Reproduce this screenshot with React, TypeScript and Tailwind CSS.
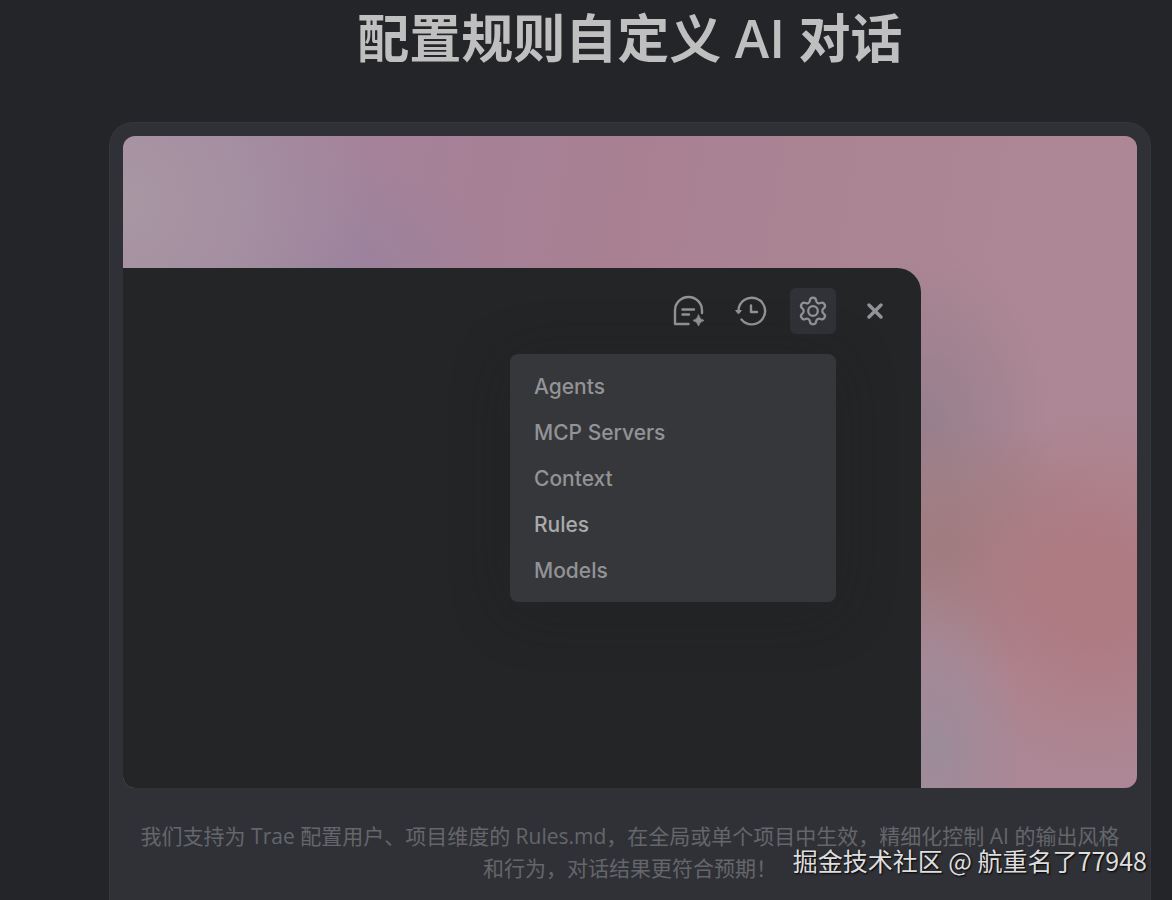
import type { ReactNode } from "react"

const menuItems = ["Agents", "MCP Servers", "Context", "Rules", "Models"]

interface ToolButtonProps {
  label: string
  active?: boolean
  children: ReactNode
}

function ToolButton({ label, active = false, children }: ToolButtonProps) {
  return (
    <button
      type="button"
      aria-label={label}
      className={`flex size-[46px] items-center justify-center rounded-md text-[#929396] ${active ? "bg-[#313238]" : ""}`}
    >
      {children}
    </button>
  )
}

function NewChatIcon() {
  return (
    <svg width="32" height="32" viewBox="0 0 32 32" fill="none" stroke="currentColor" strokeWidth="2.4" strokeLinecap="round" strokeLinejoin="round">
      <path d="M15.5 29H2V15.500a13.500 13.500 0 0 1 27 0V18" />
      <path d="M9.500 14.500h11.500M9.500 19.500h6.500" />
      <path d="M25.500 20q1 4.500 5.500 5.500q-4.500 1-5.500 5.500q-1-4.500-5.500-5.500q4.500-1 5.500-5.500Z" fill="currentColor" strokeWidth="0.8" />
    </svg>
  )
}

function HistoryIcon() {
  return (
    <svg width="32" height="32" viewBox="0 0 32 32" fill="none" stroke="currentColor" strokeWidth="2.4" strokeLinecap="round" strokeLinejoin="round">
      <path d="M3.500 15.500A13.300 13.300 0 1 1 6.500 24.500" />
      <path d="M1 15.500h5.400L3.700 18.700Z" fill="currentColor" strokeWidth="1" />
      <path d="M16 10.500V17h6" />
    </svg>
  )
}

function GearIcon() {
  return (
    <svg width="32" height="32" viewBox="0 0 24 24" fill="none" stroke="currentColor" strokeWidth="1.7" strokeLinejoin="round">
      <path d="M9.671 4.136a2.34 2.34 0 0 1 4.659 0 2.34 2.34 0 0 0 3.319 1.915 2.34 2.34 0 0 1 2.33 4.033 2.34 2.34 0 0 0 0 3.831 2.34 2.34 0 0 1-2.33 4.033 2.34 2.34 0 0 0-3.319 1.915 2.34 2.34 0 0 1-4.659 0 2.34 2.34 0 0 0-3.32-1.915 2.34 2.34 0 0 1-2.33-4.033 2.34 2.34 0 0 0 0-3.831A2.34 2.34 0 0 1 6.35 6.051a2.34 2.34 0 0 0 3.319-1.915" />
      <circle cx="12" cy="12" r="3.6" />
    </svg>
  )
}

function CloseIcon() {
  return (
    <svg width="16" height="16" viewBox="0 0 16 16" fill="none" stroke="currentColor" strokeWidth="3.4" strokeLinecap="round">
      <path d="M2 2l12 12M14 2L2 14" />
    </svg>
  )
}

function SettingsMenu() {
  return (
    <ul className="mt-5 mr-[62px] w-[326px] rounded-lg bg-[#36373a] pt-[10px] pb-2 shadow-[0_8px_60px_rgba(30,30,30,0.3)]">
      {menuItems.map((item) => (
        <li key={item}>
          <button
            type="button"
            className={`flex h-[46px] w-full items-center px-6 text-left font-[Inter,sans-serif] text-[21px] font-medium ${item === "Rules" ? "text-[#a9aaac]" : "text-[#929396]"}`}
          >
            {item}
          </button>
        </li>
      ))}
    </ul>
  )
}

export default function App() {
  return (
    <div className="relative flex min-h-screen flex-col bg-[#242529] pr-[21px] pl-[109px] font-['Open_Sans','Noto_Sans_CJK_SC',sans-serif]">
      <h1 className="pt-[6px] text-center text-[52px] leading-[64px] font-semibold text-[#bfbfbf]">
        配置规则自定义 AI 对话
      </h1>

      <section className="mt-[52px] flex-1 rounded-t-3xl border border-b-0 border-[#35363c] bg-[#303136] px-[13px] pt-[13px]">
        <div className="overflow-hidden rounded-xl bg-[radial-gradient(ellipse_250px_260px_at_0%_10%,#a997a3,#a48ea1_50%,#a48ea100),radial-gradient(ellipse_180px_130px_at_20%_22%,#9a829e,#9a829e00),radial-gradient(ellipse_90px_170px_at_80%_94%,#9c8c9a,#9c8c9a00),radial-gradient(ellipse_170px_180px_at_96%_70%,#ae7b82_25%,#ae7b8200),radial-gradient(ellipse_170px_130px_at_82%_63%,#9e7b7d,#9e7b7d00),radial-gradient(ellipse_130px_180px_at_79%_44%,#977f8d,#977f8d00),linear-gradient(100deg,#a4829a_20%,#a88092_45%,#ad8795_80%)] pt-[132px]">
          <div className="mr-[216px] flex h-[520px] flex-col items-end rounded-tr-3xl bg-[#242527] pt-5 pr-[23px]">
            <div className="flex gap-4">
              <ToolButton label="New chat">
                <NewChatIcon />
              </ToolButton>
              <ToolButton label="History">
                <HistoryIcon />
              </ToolButton>
              <ToolButton label="Settings" active>
                <GearIcon />
              </ToolButton>
              <ToolButton label="Close">
                <CloseIcon />
              </ToolButton>
            </div>
            <SettingsMenu />
          </div>
        </div>

        <p className="mt-8 px-4 text-center text-[21px] leading-8 text-[#64666b]">
          我们支持为 Trae 配置用户、项目维度的 Rules.md，在全局或单个项目中生效，精细化控制 AI 的输出风格和行为，对话结果更符合预期！
        </p>
      </section>

      <div className="absolute right-[25px] bottom-[22px] font-['Noto_Sans_CJK_SC',sans-serif] text-[25px] leading-9 text-[#dededf] [text-shadow:1px_1px_2px_#000]">
        掘金技术社区 @ 航重名了77948
      </div>
    </div>
  )
}
